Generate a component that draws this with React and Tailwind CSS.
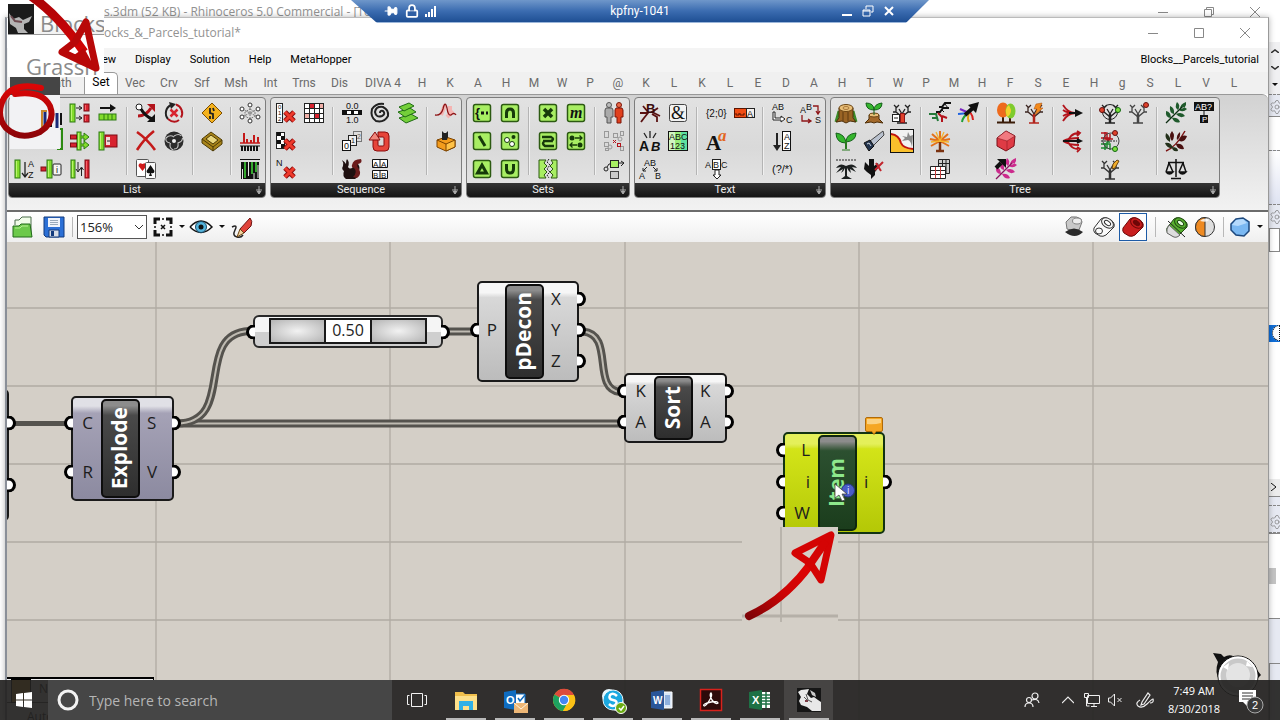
import React, { useState } from 'react';
import { Lock, Pin, Settings } from 'lucide-react';

/* ---------- small drawing helpers ---------- */

const Bar = ({ x, y = 2, w = 6, h = 20, red }) => (
  <g>
    <rect x={x} y={y} width={w} height={h} fill={red ? '#d8232f' : '#83dc2c'} stroke={red ? '#7c0c14' : '#2c7a12'} />
    <path d={`M${x + 1.5} ${y + 1}v${h - 2}`} stroke={red ? '#f4616a' : '#baf56e'} />
  </g>
);

const T = ({ x, y, s = 9, fill = '#111', children, ...rest }) => (
  <text x={x} y={y} fontSize={s} fill={fill} fontFamily="'Liberation Sans', sans-serif" {...rest}>
    {children}
  </text>
);

const RedX = () => (
  <g fill="none">
    <path d="M11 11l9 9M20 11l-9 9" stroke="#8e0f0f" strokeWidth="5" />
    <path d="M11 11l9 9M20 11l-9 9" stroke="#ee3a2c" strokeWidth="3" />
  </g>
);

const SetTile = ({ children }) => (
  <g>
    <rect x="3.5" y="3.5" width="17" height="17" rx="2" fill="#a8ee63" stroke="#2c5a12" strokeWidth="1.5" />
    {children}
  </g>
);

const Branches = ({ color = '#333', trunk = color }) => (
  <g fill="none" stroke={color} strokeWidth="1.3">
    <path d="M12 16L6 11H3M6 11V6L4 4M6 7l3-3M12 16l6-5h3M18 11V6l2-2M18 7l-3-3M12 13L9 8M12 13l3-5" />
    <path d="M12 22v-9" stroke={trunk} strokeWidth="2.5" />
    <path d="M7 22h10" stroke={trunk} />
  </g>
);

const Leaf = ({ color, dark }) => (
  <g>
    <g fill={color}>
      <path d="M7 17q-6 0-5-7q5 1 5 7M10 13q-5-1-4-8q5 2 4 8M14 9q-4-3-1-8q4 3 1 8M8 17q3 6 8 4q-2-5-8-4M12 13q4 5 9 2q-3-5-9-2M15 9q4 3 8-1q-4-4-8 1M16 8q0-5 6-7q1 6-6 7" />
    </g>
    <path d="M2 22L18 6" stroke={dark} strokeWidth="1.3" />
  </g>
);

/* ---------- ribbon icons, 24 x 24 ---------- */

const ICONS = {
  edge: <path d="M17 0h5v20h-5" fill="none" stroke="#2c8a12" strokeWidth="2" />,
  branch: (
    <g>
      <Bar x={2} w={5} y={3} h={18} />
      <path d="M8 7h6M8 17h6M11 5l3 2-3 2M11 15l3 2-3 2" stroke="#222" fill="none" />
      <Bar x={16} w={5} y={3} h={7} red />
      <Bar x={16} w={5} y={14} h={7} red />
    </g>
  ),
  shift: (
    <g>
      <path d="M4 7h14" stroke="#111" strokeWidth="2" /><path d="M14 3l6 4-6 4z" fill="#111" />
      <rect x="3" y="13" width="17" height="6" fill="#83dc2c" stroke="#2c7a12" />
      <path d="M8 13v6M12 13v6M16 13v6" stroke="#2c7a12" />
    </g>
  ),
  insert: (
    <g>
      <Bar x={9} w={4} y={3} h={18} />
      <rect x="2.500" y="6" width="6" height="4" fill="#d8232f" stroke="#7c0c14" />
      <rect x="2.500" y="14" width="6" height="4" fill="#d8232f" stroke="#7c0c14" />
      <path d="M13 7h3V4l5 4-5 4V9h-3M13 15h3v-3l5 4-5 4v-3h-3" stroke="#2c7a12" fill="#83dc2c" />
    </g>
  ),
  replace: (
    <g>
      <Bar x={3} w={5} y={3} h={18} />
      <rect x="9" y="6" width="12" height="12" fill="#d8232f" stroke="#7c0c14" />
      <rect x="10" y="8" width="4" height="8" fill="#f3d5d5" /><path d="M11 12h3" stroke="#222" />
    </g>
  ),
  sortList: (
    <g>
      <Bar x={3} w={5} y={3} h={18} />
      <path d="M13 5v15M10 16l3 4 3-4" stroke="#222" fill="none" strokeWidth="1.3" />
      <T x={16} y={10}>A</T>
      <T x={16} y={21}>Z</T>
    </g>
  ),
  item: (
    <g>
      <rect x="1" y="10" width="5" height="4" fill="#d8232f" stroke="#7c0c14" />
      <Bar x={7} w={5} y={3} h={18} />
      <rect x="13" y="7" width="8" height="11" rx="1" fill="#f5f5f5" stroke="#222" />
      <T x={16} y={16} s={9}>i</T>
    </g>
  ),
  weave: (
    <g>
      <Bar x={3} w={4} y={3} h={18} />
      <path d="M10 5v9M8 12l2 3 2-3M13.500 19v-8M11.500 13l2-3 2 3" stroke="#222" fill="none" />
      <Bar x={17} w={4} y={3} h={18} red />
    </g>
  ),
  dispatch: (
    <g>
      <circle cx="5" cy="6" r="3" fill="#fff" stroke="#222" />
      <path d="M4 15q8 0 13-8" stroke="#b3141c" strokeWidth="3" fill="none" />
      <path d="M13 3h8v8z" fill="#b3141c" />
      <path d="M7 8q4 7 11 10" stroke="#111" strokeWidth="3" fill="none" />
      <path d="M21 13v8h-8z" fill="#111" />
    </g>
  ),
  cycle: (
    <g fill="none">
      <path d="M6 18A9 9 0 0 1 9 4" stroke="#222" strokeWidth="2" />
      <path d="M7 1l7 2-5 5z" fill="#222" />
      <path d="M14 3.500a9 9 0 0 1 5 13" stroke="#b3141c" strokeWidth="2" />
      <path d="M17 19q-5 4-11-1" stroke="#b3141c" strokeWidth="2" />
      <path d="M8.500 8.500l7 7M15.500 8.500l-7 7" stroke="#d8232f" strokeWidth="2.500" />
    </g>
  ),
  cull: <path d="M3 3q10 7 18 18M20 2Q10 10 3 21" stroke="#c41a1a" strokeWidth="2.6" fill="none" />,
  swirl: (
    <g>
      <circle cx="12" cy="12" r="9.5" fill="#2c2c2c" />
      <circle cx="12" cy="12" r="2" fill="#eee" />
      <g fill="none" stroke="#c4c4c4" strokeWidth="1.100">
        <path d="M12 8q-4-3-8 1M15.500 14q5-1 5-5M8.500 14q-2 5 3 7M12 7q5-3 7 0M16 14q1 6-4 6M8 14q-5-1-4-5" />
      </g>
    </g>
  ),
  cards: (
    <g>
      <rect x="2.500" y="2.500" width="12" height="17" rx="1" fill="#fff" stroke="#555" />
      <path d="M8.500 14l-4-5q0-4 4-2q4-2 4 2z" fill="#cf1b1b" />
      <rect x="11.500" y="5.500" width="10" height="16" rx="1" fill="#fafafa" stroke="#555" />
      <path d="M16.500 8l4 6q0 3-3.500 2l1 3h-3l1-3q-3.500 1-3.500-2z" fill="#111" />
    </g>
  ),
  sign: (
    <g>
      <path d="M12 2l10 10-10 10L2 12z" fill="#f5b21d" stroke="#7c4d00" />
      <path d="M10 7v5l3 1v5M13 7l1 3M10 15v3" stroke="#222" strokeWidth="1.8" fill="none" />
    </g>
  ),
  crate: (
    <g>
      <path d="M2 10l9-7 11 8v4l-9 7L2 14z" fill="#a8841a" stroke="#4d3b05" />
      <path d="M2 10l11 8 9-7M13 18v4" stroke="#4d3b05" fill="none" />
      <path d="M6 10l5-4 7 5-5 4z" fill="#e8d67e" stroke="#4d3b05" />
    </g>
  ),
  net: (
    <g fill="none" stroke="#777">
      <path d="M12 4v16M4 8l16 8M20 8L4 16M12 8l5 3v4l-5 3-5-3v-4z" strokeDasharray="2 1" />
      <g fill="#fff" stroke="#333">
        <circle cx="12" cy="4" r="2" /><circle cx="12" cy="20" r="2" /><circle cx="4" cy="8" r="2" />
        <circle cx="20" cy="8" r="2" /><circle cx="4" cy="16" r="2" /><circle cx="20" cy="16" r="2" />
      </g>
    </g>
  ),
  histogram: (
    <g>
      <path d="M2 14h20" stroke="#c41a1a" strokeWidth="1.5" />
      <path d="M6 14V4M9 14v-4M13 14v-3M16 14V6M20 14v-6" stroke="#c41a1a" strokeWidth="2" />
      <path d="M2 17h20" stroke="#111" />
      <path d="M4 17v5M7 17v5M10 17v5M13 17v5M16 17v5M19 17v5" stroke="#111" strokeWidth="2" />
    </g>
  ),
  barcode: (
    <g>
      <path d="M2 2.500h20" stroke="#111" />
      <rect x="3" y="5" width="18" height="17" fill="#111" />
      <path d="M7 5v16M14 5v12M18 5v10" stroke="#35a82f" strokeWidth="2" />
      <path d="M4.500 12v10M10.500 5v14M16 16v6M20 8v13" stroke="#e5e5e5" />
    </g>
  ),
  cullIndex: (
    <g>
      <rect x="2.500" y="2.500" width="6" height="19" fill="#fff" stroke="#222" />
      <T x={4} y={8} s={6}>0</T><T x={4} y={14} s={6}>1</T><T x={4} y={20} s={6}>2</T>
      <RedX />
    </g>
  ),
  redGrid: (
    <g>
      <rect x="2.500" y="2.500" width="19" height="19" fill="#fff" stroke="#222" />
      <rect x="8" y="3" width="4" height="4" fill="#d8232f" /><rect x="12" y="12" width="5" height="5" fill="#d8232f" />
      <rect x="17" y="3" width="4" height="4" fill="#f0b0a8" /><rect x="3" y="12" width="4" height="5" fill="#f0b0a8" />
      <path d="M7.500 3v18M12.500 3v18M17.500 3v18M3 7.500h18M3 12.500h18M3 17.500h18" stroke="#222" />
    </g>
  ),
  cullPattern: (
    <g>
      <rect x="2.500" y="3.500" width="8" height="16" fill="#fff" stroke="#222" />
      <path d="M3 3h4v4H3zM7 7h4v4H7zM3 11h4v4H3zM7 15h4v4H7z" fill="#111" />
      <RedX />
    </g>
  ),
  cullN: (
    <g>
      <T x={2} y={9}>N</T>
      <RedX />
    </g>
  ),
  range: (
    <g>
      <T x={6} y={8}>0.0</T>
      <rect x="2.500" y="9.500" width="19" height="4" fill="#fff" stroke="#111" />
      <path d="M3 11.500h4M11 11.500h3M18 11.500h3" stroke="#111" strokeWidth="4" />
      <T x={6} y={22}>1.0</T>
    </g>
  ),
  spiral: (
    <path d="M12 12q0-3 3-2q3 3-1 5q-6 2-7-4q1-6 8-5q6 3 5 9q-4 7-12 5q-6-4-4-12q4-6 12-5" fill="none" stroke="#222" strokeWidth="2" />
  ),
  steps: (
    <g fill="#74cf3a" stroke="#1f6b14">
      <path d="M3 17l12-4 7 4-12 5z" /><path d="M2 11l12-4 6 4-11 5z" /><path d="M3 6l10-4 5 3-10 5z" />
    </g>
  ),
  series: (
    <g>
      <rect x="13.500" y="2.500" width="8" height="10" fill="#ddd" stroke="#777" />
      <rect x="8.500" y="6.500" width="8" height="10" fill="#eee" stroke="#222" />
      <rect x="2.500" y="11.500" width="8" height="10" fill="#fff" stroke="#111" />
      <T x={4} y={20}>0</T><T x={11} y={14} s={7}>1</T><T x={17} y={10} s={7} fill="#666">2</T>
    </g>
  ),
  loop: (
    <g>
      <path d="M5 10v8q0 4 4 4h8q4 0 4-4V7q0-4-4-4h-7v5h5q1 0 1 1v7q0 1-1 1h-4q-1 0-1-1v-6z" stroke="#8a0d0d" fill="#e6453a" />
      <path d="M1 11l6-8 5 8z" fill="#f0877c" stroke="#8a0d0d" />
    </g>
  ),
  rabbit: (
    <g>
      <path d="M2 3q3 2 4 4q0-4 1-5q3 3 1 8q2 3 5 0q1-4 5-3q3 4 0 8q1 5-3 7H6q-4-3-2-8q-3-2-1-5q1-3-1-6" fill="#1f1010" />
      <path d="M12 8q1-6 9-6q2 4-3 5q-2 2 1 5q3 6-2 9l-4-1q5-5 1-9q-3-1-2-3" fill="#6b1c1c" />
    </g>
  ),
  aabb: (
    <g>
      <path d="M4.500 2.500h15v8h-15zM4.500 13.500h15v8h-15zM12 3v8M12 13v8" fill="#fff" stroke="#111" />
      <T x={5} y={10} s={8}>A</T><T x={13} y={10} s={8}>A</T><T x={5} y={21} s={8}>B</T><T x={13} y={21} s={8}>B</T>
    </g>
  ),
  jitter: (
    <g fill="none">
      <path d="M7 14l4-10M13 16l6-6M16 5v7" stroke="#f5b4b2" strokeWidth="4" />
      <path d="M1 14q6 1 8-6q2-9 4-1q1 8 4 7q3-3 5 0" stroke="#8e1618" strokeWidth="1.300" />
    </g>
  ),
  catBox: (
    <g>
      <path d="M3 11l9-3 9 3v7l-9 4-9-4z" fill="#f49c1c" stroke="#7c4300" />
      <path d="M12 15l9-4v7l-9 4z" fill="#ffc247" stroke="#7c4300" /><path d="M3 11l9 4" stroke="#7c4300" />
      <path d="M8 11V2l2 2h2l2-2v6l-1 3z" fill="#222" />
    </g>
  ),
  setMember: <SetTile><T x={5} y={16} s={13} fontWeight="bold">{'{'}</T><path d="M11 12h3M16 12h2" stroke="#111" strokeWidth="3" /></SetTile>,
  setIntersect: <SetTile><path d="M8.500 17v-5q0-4 3.500-4t3.500 4v5" fill="none" stroke="#163a0a" strokeWidth="3" /></SetTile>,
  setDiff: <SetTile><path d="M9 7l6 10" stroke="#163a0a" strokeWidth="3" /></SetTile>,
  setDisjoint: <SetTile><circle cx="9" cy="11" r="2.500" fill="#fff" stroke="#163a0a" /><circle cx="14" cy="15" r="2.500" fill="#fff" stroke="#163a0a" /><circle cx="15.500" cy="8" r="2" fill="#163a0a" /></SetTile>,
  setDelta: <SetTile><path d="M12 8l4.500 8h-9z" fill="#a8ee63" stroke="#163a0a" strokeWidth="3" /></SetTile>,
  setUnion: <SetTile><path d="M8.500 7v5q0 4 3.500 4t3.500-4V7" fill="none" stroke="#163a0a" strokeWidth="3" /></SetTile>,
  setCross: <SetTile><path d="M8 8l8 8M16 8l-8 8" stroke="#163a0a" strokeWidth="3.500" /></SetTile>,
  setMajority: <SetTile><T x={6} y={17} s={16} fontStyle="italic" fontWeight="bold" style={{ fontFamily: 'Liberation Serif, serif' }}>m</T></SetTile>,
  setString: <SetTile><path d="M6 8h9q4 2 0 4H7M17 12H9q-4 2 0 5h9" fill="none" stroke="#163a0a" strokeWidth="2.500" /></SetTile>,
  setSwap: <SetTile><circle cx="8" cy="9" r="2.500" fill="#163a0a" /><circle cx="16" cy="16" r="2.500" fill="#163a0a" /><path d="M11 9h7M15.500 6.500l2.500 2.500-2.500 2.500M13 16H6M8.500 13.500L6 16l2.500 2.500" fill="none" stroke="#163a0a" strokeWidth="1.300" /></SetTile>,
  setSplit: (
    <g>
      <path d="M3 3h7l-2 3 3 3-3 3 3 3-3 3 2 3H3zM15 3h6v18h-6l2-3-3-3 3-3-3-3 3-3z" fill="#a8ee63" stroke="#2c5a12" />
      <path d="M13 2l-2 3 3 3-3 4 3 3-3 3 2 3" fill="none" stroke="#222" strokeDasharray="2 1" />
    </g>
  ),
  people: (
    <g>
      <circle cx="7" cy="4" r="2.500" fill="#bbb" stroke="#555" />
      <path d="M4 7h6l1 2v7H9v6H5v-6H3V9z" fill="#aaa" stroke="#555" />
      <circle cx="17" cy="4" r="2.500" fill="#e86a48" stroke="#7c1408" />
      <path d="M14 7h6l1 2v7h-2v6h-4v-6h-2V9z" fill="#e0401d" stroke="#7c1408" />
    </g>
  ),
  nodesGrey: (
    <g fill="none" stroke="#999">
      <rect x="2.500" y="2.500" width="4" height="6" /><rect x="11.500" y="4.500" width="4" height="4" /><rect x="18.500" y="2.500" width="3" height="4" />
      <rect x="2.500" y="13.500" width="4" height="4" /><circle cx="8" cy="18" r="2" /><rect x="18.500" y="17.500" width="3" height="4" /><circle cx="18" cy="10" r="2" /><rect x="3.500" y="19.500" width="3" height="2" />
      <path d="M11 11l3 3M14 11l-3 3" stroke="#b3141c" /><rect x="15.500" y="14.500" width="3" height="3" stroke="#b3141c" />
    </g>
  ),
  link: (
    <g>
      <rect x="8.500" y="3.500" width="8" height="7" fill="#a8ee63" stroke="#222" />
      <rect x="8.500" y="14.500" width="8" height="7" fill="#ccc" stroke="#444" />
      <path d="M17 6h5M19 4l3 2-3 3" stroke="#222" fill="none" /><circle cx="4" cy="12" r="2" fill="none" stroke="#222" /><path d="M5 10l2-3h2" stroke="#222" fill="none" />
    </g>
  ),
  spiderB: (
    <g>
      <path d="M5 5l5 6M2 12h8l-4 5-3 4M20 7l-6 4 8 4M14 13l5 3v5" stroke="#5a1212" strokeWidth="1.800" fill="none" />
      <T x={8} y={12} s={13} fill="#3a0c0c" fontWeight="bold">B</T>
    </g>
  ),
  ampersand: (
    <g>
      <rect x="3.500" y="3.500" width="17" height="17" rx="2" fill="#f2f2f2" stroke="#444" />
      <text x="5" y="18" fontSize="18" fontFamily="Liberation Serif, serif" fill="#111">&amp;</text>
    </g>
  ),
  split: (
    <g>
      <T x={1} y={22} s={14} fontWeight="bold">A</T><T x={13} y={22} s={13} fontStyle="italic" fontWeight="bold">B</T>
      <path d="M12 2v7M6 4l3 5M18 4l-3 5" stroke="#222" strokeWidth="1.300" />
    </g>
  ),
  abc123: (
    <g>
      <rect x="2.500" y="2.500" width="19" height="19" fill="#d2f6c2" stroke="#111" />
      <rect x="9" y="3" width="6" height="18" fill="#9aee7a" /><rect x="15" y="3" width="6" height="18" fill="#5ee0a0" />
      <T x={3} y={11}>ABC</T><T x={4} y={20}>123</T>
    </g>
  ),
  abTree: (
    <g>
      <T x={6} y={9}>AB</T><T x={1} y={22}>A</T><T x={17} y={22}>B</T>
      <path d="M9 10l-4 4M5 11v3h3M15 10l4 4M19 11v3h-3" stroke="#222" fill="none" />
    </g>
  ),
  format: <T x={2} y={16} s={10}>{'{2;0}'}</T>,
  redTag: (
    <g>
      <rect x="2.500" y="7.500" width="20" height="9" fill="#f24d14" stroke="#5c1400" />
      <rect x="14.500" y="7.500" width="8" height="9" fill="#f5efec" stroke="#222" />
      <T x={15} y={16}>A</T><path d="M4 12v2h3v-2M8 12v2h4v-2" stroke="#5c1400" fill="none" />
    </g>
  ),
  font: (
    <g fontFamily="Liberation Serif, serif">
      <text x="2" y="21" fontSize="21" fontWeight="bold" fill="#111">A</text>
      <text x="14" y="12" fontSize="17" fontWeight="bold" fontStyle="italic" fill="#e2661e">a</text>
    </g>
  ),
  abcDown: (
    <g>
      <rect x="8.500" y="2.500" width="8" height="10" fill="#fff" stroke="#222" />
      <T x={1} y={11}>A</T><T x={9} y={11}>B</T><T x={17} y={11}>C</T>
      <path d="M11 13h4v5h2l-4 4-4-4h2z" fill="#fff" stroke="#222" />
    </g>
  ),
  abToC: (
    <g>
      <T x={2} y={9}>AB</T><T x={16} y={22}>C</T>
      <path d="M3 11v8h8v2l4-3-4-3v2H5v-6z" fill="#fff" stroke="#222" />
    </g>
  ),
  abToS: (
    <g>
      <T x={2} y={12}>A</T><T x={8} y={9}>B</T><T x={17} y={22}>S</T>
      <path d="M15 5h5v8M18 10l2 3 2-3M4 14v6h9M10 18l3 2-3 2" stroke="#8e1618" fill="none" strokeWidth="1.300" />
    </g>
  ),
  sortText: (
    <g>
      <path d="M7 4v14" stroke="#222" strokeWidth="2" /><path d="M3 16h8l-4 6z" fill="#222" />
      <rect x="12.500" y="2.500" width="8" height="19" fill="#fff" stroke="#111" />
      <T x={14} y={11}>A</T><T x={14} y={20}>Z</T>
    </g>
  ),
  match: <T x={2} y={16} s={11}>(?/*)</T>,
  stump: (
    <g>
      <path d="M2 21q2-7 3-11M22 21q-2-7-3-11" stroke="#3c8a28" strokeWidth="3" />
      <path d="M5 7v10l-3 4 6-1 4 2 4-2 6 1-3-4V7z" fill="#9a6424" stroke="#4d2e08" />
      <path d="M9 11v9M14 11v9" stroke="#5e3a10" />
      <ellipse cx="12" cy="7" rx="7" ry="3.500" fill="#e9bf78" stroke="#6b4412" /><ellipse cx="12" cy="7" rx="3" ry="1.500" fill="none" stroke="#a9783a" />
    </g>
  ),
  regrow: (
    <g>
      <path d="M7 14v4l-4 4 6-1 3 1 3-1 6 1-4-4v-4z" fill="#a3692a" stroke="#4d2e08" />
      <ellipse cx="12" cy="14" rx="5" ry="2" fill="#e9bf78" stroke="#6b4412" />
      <path d="M12 9q-8 0-8-7q8 0 8 7M12 9q0-6 8-7q0 7-8 7M12 8v6" fill="#35b52e" stroke="#14601a" />
    </g>
  ),
  prune: (
    <g>
      <Branches color="#222" />
      <rect x="10.500" y="12.500" width="4" height="9" fill="#e0412a" stroke="#8e1618" />
      <rect x="2.500" y="13.500" width="7" height="7" fill="#fff" stroke="#222" /><path d="M4 17h4" stroke="#222" />
    </g>
  ),
  sprout: (
    <g>
      <path d="M12 14q-10 0-10-10q9 1 10 10M12 13q0-8 10-9q0 8-10 9" fill="#35b52e" stroke="#14601a" />
      <path d="M12 12v8" stroke="#2a7a20" strokeWidth="2" /><path d="M8 21h8" stroke="#2a7a20" />
    </g>
  ),
  saw: (
    <g>
      <path d="M8 12L21 2l1 4-11 11z" fill="#b9c1ce" stroke="#444" />
      <path d="M2 14l6-3 4 6-5 5-2-3z" fill="#23344e" stroke="#111" /><path d="M5 15l2-1 2 3" stroke="#cdd3dc" fill="none" />
    </g>
  ),
  graft: (
    <g>
      <rect x="0.500" y="0.500" width="23" height="23" fill="#f1f1f1" stroke="#111" />
      <path d="M1 5q8 1 10 9q2 5 12 6v3H1z" fill="#f9c02c" />
      <path d="M1 5q8 1 10 9q2 5 12 6" fill="none" stroke="#c2140f" strokeWidth="2" />
      <path d="M22 18q-1-6-4-7l-6 1 3-3-3-2 5 1 1-5 2 4 3-1z" fill="#8a8a8a" />
    </g>
  ),
  palm: (
    <g>
      <path d="M2 3h20" stroke="#222" strokeDasharray="2 1" />
      <path d="M12 9q-6-4-10 2l5-1-5 6 7-4-2 4q3-2 4-5v8l-4 3h11l-5-3v-8q2 4 4 5l-1-4 6 3-4-5 5 1q-4-6-11-2" fill="#1c2020" />
    </g>
  ),
  trim: (
    <g>
      <path d="M7 2h5v7l4-3 1 4-4 5v3l-4 4v-4l-4-3-3-3 1-7 4 4z" fill="#111" />
      <path d="M13 13l8-8M14 6l5 8" stroke="#c2252d" strokeWidth="2" />
    </g>
  ),
  dna: (
    <g>
      <path d="M23 2h-6l-3 4h-3M21 7h-6l-3 4H8" stroke="#111" strokeWidth="2" fill="none" />
      <path d="M17 3l3 4M13 8l3 3" stroke="#111" />
      <path d="M10 12l4 4 0 5M14 15l5 2" stroke="#b3141c" strokeWidth="2" fill="none" />
      <path d="M1 13l7 0 2 7M4 17h5" stroke="#257a3a" strokeWidth="2" fill="none" />
    </g>
  ),
  rainbow: (
    <g fill="none" strokeWidth="2">
      <path d="M13 12L4 8" stroke="#7a25c2" /><path d="M13 12L2 13" stroke="#1f63e0" /><path d="M13 12q-6 3-7 9" stroke="#20a038" />
      <path d="M13 12q-2 5 0 9" stroke="#e8a613" /><path d="M14 11q3 4 3 8" stroke="#d82020" />
      <path d="M9 14l9-8" stroke="#111" strokeWidth="4" /><path d="M12 4l11-3-3 11z" fill="#111" />
    </g>
  ),
  fire: (
    <g>
      <g stroke="#e2701a" strokeWidth="2" fill="none"><path d="M12 12L4 5M12 12V2M12 12l8-7M12 12L2 10M12 12l10-2M12 12l-9 5M12 12l9 5" /></g>
      <g stroke="#f4b42c" strokeWidth="1.300" fill="none"><path d="M12 12L8 3M12 12l4-9M12 12L3 13M12 12l9 1" /></g>
      <path d="M12 13v9M8 22h8" stroke="#7a3210" strokeWidth="2.500" />
    </g>
  ),
  tables: (
    <g>
      <path d="M10.500 2.500h11v14h-11zM14.500 3v14M18 3v14M11 6.500h11" fill="#ccc" stroke="#222" />
      <path d="M2.500 9.500h15v12h-15zM2.500 13.500h15M2.500 17.500h15" fill="#fff" stroke="#222" /><path d="M7.500 10v11M12.500 10v11" stroke="#c63a3a" />
    </g>
  ),
  autumn: (
    <g>
      <path d="M9 14v7M16 14v7M3 21.500h18" stroke="#3a1c08" strokeWidth="2" />
      <ellipse cx="9" cy="9" rx="6" ry="7.500" fill="#ee6a1c" /><ellipse cx="16.500" cy="10" rx="5" ry="7.500" fill="#7ecb2c" />
      <path d="M15 4q-5 3-2 12q4-2 4-7z" fill="#f2d22c" />
    </g>
  ),
  lightning: (
    <g>
      <Branches color="#3a2420" trunk="#b3241c" />
      <path d="M14 3l6-1-2 5h3l-8 7 2-6h-3z" fill="#f28a1c" stroke="#a84a08" strokeWidth=".5" />
    </g>
  ),
  ruby: (
    <g stroke="#7c1019">
      <path d="M3 9l9-7 9 5-1 10-8 5-9-5z" fill="#df3b45" /><path d="M3 9l10 3 8-5-9-5z" fill="#f17a80" strokeWidth=".5" /><path d="M13 12v9" strokeWidth=".5" />
    </g>
  ),
  pinkLeaf: (
    <g>
      <Leaf color="#cc2a8c" dark="#8a1460" />
      <path d="M2 11l5-5" stroke="#111" strokeWidth="4" /><path d="M3 2h9v9z" fill="#111" />
    </g>
  ),
  merge: (
    <g fill="none" stroke="#b3141c" strokeWidth="1.800">
      <path d="M3 4q5 8 12 8M3 9q4 3 12 3M3 20q5-8 12-8" /><path d="M3 15q5-3 13-3" /><path d="M9 12h8" stroke="#111" /><path d="M15 8l8 4-8 4z" fill="#111" stroke="none" />
    </g>
  ),
  explodeTree: (
    <g fill="none" stroke="#b3141c" strokeWidth="1.800">
      <path d="M3 12q5 0 8-5 3-3 8-3M3 12q6-3 16-3M3 12q6 4 16 4M3 12q5 0 7 4 3 4 8 4M17 2l3 2-3 3M17 18l3 2-3 3" /><path d="M3 12h17M17 10l4 2-4 2" stroke="#111" />
    </g>
  ),
  treeBalls: (
    <g>
      <Branches color="#222" />
      <circle cx="12" cy="11" r="7.500" fill="none" stroke="#222" />
      <circle cx="4" cy="9" r="2.500" fill="#e0412a" stroke="#611" /><circle cx="20" cy="9" r="2.500" fill="#7be03c" stroke="#161" />
    </g>
  ),
  treeRed: <g><Branches color="#444" /><circle cx="20" cy="4" r="2.500" fill="#e0412a" stroke="#611" /></g>,
  treeMix: (
    <g fill="none">
      <path d="M3 4h6v7h3M3 9h9V5M7 3v7h8" stroke="#b3141c" strokeWidth="1.500" />
      <path d="M3 19h6v-6h3M3 15h9v6M7 21v-7" stroke="#1d8a30" strokeWidth="1.500" />
      <circle cx="13" cy="12" r="8" stroke="#444" /><path d="M3 12h16" stroke="#222" strokeDasharray="2 1" />
      <circle cx="17" cy="4" r="2.500" fill="#e0412a" stroke="#611" /><circle cx="17" cy="20" r="2.500" fill="#7be03c" stroke="#161" />
    </g>
  ),
  treeGold: <g><Branches color="#333" /><path d="M14 12l1-5 4-4 2 1-4 7z" fill="#f0ac2a" stroke="#6b4412" /></g>,
  leaf: <Leaf color="#1f5a2c" dark="#0c2c12" />,
  abQuery: (
    <g>
      <rect x="2" y="1" width="20" height="9" fill="#111" /><T x={3} y={9} fill="#fff">AB?</T>
      <path d="M12 10v4" stroke="#111" /><rect x="8" y="14" width="8" height="8" fill="#111" /><T x={10} y={21} s={8} fill="#fff">P</T>
    </g>
  ),
  leaves: (
    <g>
      <path d="M2 22Q12 18 21 2" stroke="#7c1414" strokeWidth="1.500" fill="none" />
      <g fill="#4a1010"><path d="M8 2q4 5 0 10q-4-5 0-10M16 3q1 5-3 8q-1-5 3-8M23 7q-2 7-8 5q2-7 8-5M12 15q7-1 8 5q-7 1-8-5" /></g>
      <g fill="#23301a"><path d="M2 4q5 3 4 9q-6-3-4-9M1 14q6-1 8 5q-6 1-8-5M8 18q6 0 6 4q-6 1-6-4" /></g>
    </g>
  ),
  scales: (
    <g fill="none" stroke="#111" strokeWidth="1.500">
      <path d="M12 2v18M7 21.500h10M4 5.500h16M5 6L2 15M5 6l4 9M19 6l-4 9M19 6l3 9" /><path d="M2 15h7q-3.500 4-7 0M15 15h7q-3.500 4-7 0" fill="#111" />
    </g>
  ),
};

const GROUPS = [
  {
    name: 'List',
    sections: [
      { cols: 'grid-cols-[repeat(4,28px)]', icons: [null, null, 'branch', 'shift', null, 'edge', 'insert', 'replace', 'sortList', 'item', 'weave', null] },
      { cols: 'grid-cols-[repeat(2,28px)]', icons: ['dispatch', 'cycle', 'cull', 'swirl', 'cards', null] },
      { cols: 'grid-cols-[28px]', icons: ['sign', 'crate', null] },
      { cols: 'grid-cols-[28px]', icons: ['net', 'histogram', 'barcode'] },
    ],
  },
  {
    name: 'Sequence',
    sections: [
      { cols: 'grid-cols-[repeat(2,28px)]', icons: ['cullIndex', 'redGrid', 'cullPattern', null, 'cullN', null] },
      { cols: 'grid-cols-[repeat(3,28px)]', icons: ['range', 'spiral', 'steps', 'series', 'loop', null, 'rabbit', 'aabb', null] },
      { cols: 'grid-cols-[28px]', icons: ['jitter', 'catBox', null] },
    ],
  },
  {
    name: 'Sets',
    sections: [
      { cols: 'grid-cols-[repeat(2,28px)]', icons: ['setMember', 'setIntersect', 'setDiff', 'setDisjoint', 'setDelta', 'setUnion'] },
      { cols: 'grid-cols-[repeat(2,28px)]', icons: ['setCross', 'setMajority', 'setString', 'setSwap', 'setSplit', null] },
      { cols: 'grid-cols-[28px]', icons: ['people', 'nodesGrey', 'link'] },
    ],
  },
  {
    name: 'Text',
    sections: [
      { cols: 'grid-cols-[repeat(2,28px)]', icons: ['spiderB', 'ampersand', 'split', 'abc123', 'abTree', null] },
      { cols: 'grid-cols-[repeat(2,28px)]', icons: ['format', 'redTag', 'font', null, 'abcDown', null] },
      { cols: 'grid-cols-[repeat(2,28px)]', icons: ['abToC', 'abToS', 'sortText', null, 'match', null] },
    ],
  },
  {
    name: 'Tree',
    sections: [
      { cols: 'grid-cols-[repeat(3,28px)]', icons: ['stump', 'regrow', 'prune', 'sprout', 'saw', 'graft', 'palm', 'trim', null] },
      { cols: 'grid-cols-[repeat(2,28px)]', icons: ['dna', 'rainbow', 'fire', null, 'tables', null] },
      { cols: 'grid-cols-[repeat(2,28px)]', icons: ['autumn', 'lightning', 'ruby', null, 'pinkLeaf', null] },
      { cols: 'grid-cols-[28px]', icons: ['merge', 'explodeTree', null] },
      { cols: 'grid-cols-[repeat(2,28px)]', icons: ['treeBalls', 'treeRed', 'treeMix', null, 'treeGold', null] },
      { cols: 'grid-cols-[repeat(2,28px)]', icons: ['leaf', 'abQuery', 'leaves', null, 'scales', null] },
    ],
  },
];

const TABS = [
  { label: 'ath', width: 'w-[42px]' },
  { label: 'Set', width: 'w-[34px]' },
  { label: 'Vec', width: 'w-[34px]' },
  { label: 'Crv', width: 'w-[34px]' },
  { label: 'Srf', width: 'w-[32px]' },
  { label: 'Msh', width: 'w-[36px]' },
  { label: 'Int', width: 'w-[33px]' },
  { label: 'Trns', width: 'w-[34px]' },
  { label: 'Dis', width: 'w-[37px]' },
  { label: 'DIVA 4', width: 'w-[50px]' },
  ...'HKAHMWP@KLKLEDAHTWPMHFSEHgSLVL'.split('').map((label) => ({ label, width: 'w-7' })),
];

function TitleButtons({ maximized }) {
  return (
    <div className="flex shrink-0 gap-[6px] text-[#888]">
      <button type="button" aria-label="Minimize" className="flex h-4 w-10 items-center justify-center">
        <svg className="h-3 w-3" viewBox="0 0 12 12"><path d="M1 6.500h10" stroke="currentColor" /></svg>
      </button>
      <button type="button" aria-label="Maximize" className="flex h-4 w-10 items-center justify-center">
        <svg className="h-3 w-3" viewBox="0 0 12 12" fill="none" stroke="currentColor">
          {maximized ? <path d="M1.500 3.500h7v7h-7zM3.500 3.500v-2h7v7h-2" /> : <path d="M1.500 1.500h9v9h-9z" />}
        </svg>
      </button>
      <button type="button" aria-label="Close" className="flex h-4 w-10 items-center justify-center">
        <svg className="h-3 w-3" viewBox="0 0 12 12"><path d="M1 1l10 10M11 1L1 11" stroke="currentColor" /></svg>
      </button>
    </div>
  );
}

function RibbonGroup({ name, sections }) {
  return (
    <section className="flex flex-col overflow-hidden rounded-[4px] border border-[#7d7d7d] bg-linear-to-b from-[#e2e2e2] via-[#d9d9d9] to-[#e6e6e6]">
      <div className="flex px-px pt-px">
        {sections.map((section, i) => (
          <React.Fragment key={i}>
            {i > 0 && <div className="mx-[4px] my-2 w-[2px] border-l border-[#b4b4b4] bg-[#f0f0f0]" />}
            <div className={`grid auto-rows-[28px] ${section.cols}`}>
              {section.icons.map((icon, n) =>
                icon ? (
                  <button key={n} type="button" aria-label={icon} className="grid place-items-center">
                    <svg className="h-6 w-6 overflow-visible" viewBox="0 0 24 24">{ICONS[icon]}</svg>
                  </button>
                ) : (
                  <span key={n} />
                )
              )}
            </div>
          </React.Fragment>
        ))}
      </div>
      <div className="flex h-[14px] items-center bg-linear-to-b from-[#353535] to-[#151515] pr-[2px] text-[11px] leading-[14px] text-[#eee]">
        <span className="flex-1 text-center">{name}</span>
        <svg className="h-2 w-2" viewBox="0 0 8 8"><path d="M4 0v6M1 4h6M2 5l2 3 2-3" stroke="#aaa" fill="#aaa" /></svg>
      </div>
    </section>
  );
}

function Ribbon() {
  const [active, setActive] = useState(1);
  return (
    <div>
      <nav className="flex h-[22px] bg-[#f0f0f0] pl-[35px] text-[12px] text-[#6b6b6b]">
        {TABS.map((tab, i) => (
          <button
            key={i}
            type="button"
            onClick={() => setActive(i)}
            className={`${tab.width} shrink-0 text-center ${
              i === active ? 'z-10 rounded-t-[5px] border border-b-0 border-[#999] bg-white pb-1 text-black' : ''
            }`}
          >
            {tab.label}
          </button>
        ))}
      </nav>
      <div className="flex h-[116px] items-start gap-[4px] rounded-tr-[6px] border-t border-[#999] bg-linear-to-b from-[#d2d2d2] to-[#f2f2f2] pt-[2px] pl-px">
        {GROUPS.map((group) => (
          <RibbonGroup key={group.name} {...group} />
        ))}
      </div>
    </div>
  );
}

const Caret = () => (
  <svg className="h-1 w-[6px]" viewBox="0 0 6 4"><path d="M0 0h6L3 3z" fill="#111" /></svg>
);

const Tube = ({ body, hole, line = '#333' }) => (
  <g stroke={line}>
    <path d="M2 13L9 4q2-2 6-1l6 4q2 2 1 5l-8 8q-3 2-6 1l-5-3q-2-2-1-5z" fill={body} />
    <ellipse cx="15.500" cy="8" rx="6.500" ry="4.500" transform="rotate(35 15.500 8)" fill={body} />
    <ellipse cx="15.500" cy="8" rx="3.500" ry="2" transform="rotate(35 15.500 8)" fill={hole} />
  </g>
);

function Toolbar() {
  return (
    <div className="flex h-8 shrink-0 items-center border-t-2 border-[#6b6b6b] bg-linear-to-b from-white to-[#efefef] pr-[5px]">
      <button type="button" aria-label="Open file" className="grid h-6 w-[31px] place-items-center">
        <svg className="h-6 w-6" viewBox="0 0 24 24">
          <path d="M4 10V5h4l3-3h9v18H4" fill="#f0fce8" stroke="#4b6c4b" />
          <path d="M2 11h6l2-2h9l2 13H2z" fill="#6cc94a" stroke="#226b1a" /><path d="M4 13h5l2-2h6" fill="none" stroke="#b5f090" />
        </svg>
      </button>
      <button type="button" aria-label="Save file" className="grid h-6 w-[31px] place-items-center">
        <svg className="h-6 w-6" viewBox="0 0 24 24">
          <path d="M2 2h20v20H4l-2-2z" fill="#2c70d6" stroke="#123a7c" />
          <path d="M6 3h12v9H6z" fill="#eef3fb" /><path d="M8 5.500h8M8 7.500h8M8 9.500h8" stroke="#9ab" />
          <path d="M7 15h10v7H7z" fill="#d8dde6" stroke="#123a7c" /><path d="M9 16h3v5H9z" fill="#123a7c" />
        </svg>
      </button>
      <span className="mr-[4px] ml-[3px] h-5 w-px bg-[#b8b8b8]" />
      <div className="relative">
        <select aria-label="Zoom" defaultValue="156%" className="h-6 w-[70px] appearance-none border border-[#555] bg-white pl-[2px] font-['Open_Sans'] text-[13px] leading-5 text-[#222]">
          <option>100%</option>
          <option>156%</option>
          <option>200%</option>
        </select>
        <svg className="pointer-events-none absolute top-2 right-1 h-2 w-2" viewBox="0 0 8 8"><path d="M0 2l4 4 4-4" fill="none" stroke="#333" /></svg>
      </div>
      <button type="button" aria-label="Zoom extents" className="ml-1 flex h-6 items-center gap-1">
        <svg className="h-6 w-6" viewBox="0 0 24 24">
          <path d="M4 9V4h5M15 4h5v5M20 15v5h-5M9 20H4v-5" fill="none" stroke="#111" strokeWidth="3" />
          <path d="M10 10l4 4M14 10l-4 4M4 11v2M20 11v2M11 4h2M11 20h2" stroke="#111" strokeWidth="1.500" />
        </svg>
        <Caret />
      </button>
      <button type="button" aria-label="Named views" className="ml-[4px] flex h-6 items-center gap-[6px]">
        <svg className="h-6 w-6" viewBox="0 0 24 24">
          <path d="M1 12Q12 0 23 12Q12 23 1 12" fill="#fff" stroke="#111" strokeWidth="1.500" />
          <circle cx="12" cy="12" r="5.500" fill="#54b4dc" stroke="#1a4a66" /><circle cx="12" cy="12" r="2.500" fill="#111" />
        </svg>
        <Caret />
      </button>
      <button type="button" aria-label="Sketch" className="ml-[5px] grid h-6 w-6 place-items-center">
        <svg className="h-6 w-6" viewBox="0 0 24 24">
          <path d="M2 12q6-3 3 3t2 7q4 1 6-2" fill="none" stroke="#222" strokeWidth="1.500" />
          <path d="M10 14L20 3q3 3 1 8l-7 7z" fill="#e0433a" stroke="#6b1414" /><path d="M10 14l4 4-7 4z" fill="#f1d3a0" stroke="#6b4412" />
        </svg>
      </button>

      <div className="ml-auto flex items-center">
        <button type="button" aria-label="No preview" className="grid h-7 w-[30px] place-items-center">
          <svg className="h-6 w-6" viewBox="0 0 24 24">
            <path d="M4 7l5-5q6-1 10 2l1 3-3 8q-6 2-12-1z" fill="#c9c9c9" stroke="#777" /><ellipse cx="15" cy="6" rx="4.500" ry="3" fill="#eee" stroke="#888" />
            <path d="M3 17q9-7 18 0q-8 8-18 0" fill="#2a2a2a" />
          </svg>
        </button>
        <button type="button" aria-label="Wireframe preview" className="grid h-7 w-[30px] place-items-center">
          <svg className="h-6 w-6" viewBox="0 0 24 24"><Tube body="#fafafa" hole="#fff" /><ellipse cx="7" cy="16" rx="3.500" ry="3" fill="none" stroke="#333" /></svg>
        </button>
        <button type="button" aria-label="Shaded preview" className="grid h-7 w-7 place-items-center border border-[#1d5ba6] bg-[#fdfdfd]">
          <svg className="h-6 w-6" viewBox="0 0 24 24"><Tube body="#c81e1e" hole="#6e0808" line="#6e0808" /></svg>
        </button>
        <span className="mr-[7px] ml-[8px] h-5 w-px bg-[#b8b8b8]" />
        <button type="button" aria-label="Preview selected" className="grid h-7 w-7 place-items-center">
          <svg className="h-6 w-6" viewBox="0 0 24 24">
            <Tube body="#58b02e" hole="#e8ffe0" line="#1f4a10" />
            <path d="M4 10l11 10q-4 4-8 1l-5-3q-1-4 2-8" fill="#ddd" stroke="#666" /><path d="M3 6l17 16" stroke="#222" />
          </svg>
        </button>
        <button type="button" aria-label="Document settings" className="grid h-7 w-7 place-items-center">
          <svg className="h-6 w-6" viewBox="0 0 24 24">
            <circle cx="12" cy="12" r="9.500" fill="#dedede" stroke="#333" /><path d="M12 2.500a9.500 9.500 0 0 0 0 19z" fill="#ee8a22" stroke="#333" />
            <path d="M7 6q4-4 9-1q-2 3-9 1" fill="#fff" opacity=".8" />
          </svg>
        </button>
        <span className="mx-[4px] h-5 w-px bg-[#b8b8b8]" />
        <button type="button" aria-label="Mesh quality" className="flex h-7 items-center gap-[5px]">
          <svg className="h-6 w-6" viewBox="0 0 24 24">
            <path d="M8 4l7-1 6 4v9l-5 5-8-1-5-5V9z" fill="#7ab8f2" stroke="#1c477c" strokeWidth="1.500" /><path d="M8 5l7-1 4 4-9 3-6-1z" fill="#b5dafc" />
          </svg>
          <Caret />
        </button>
      </div>
    </div>
  );
}

/* ---------- canvas components ---------- */

const Port = ({ side }) => (
  <span
    className={
      side === 'left'
        ? 'absolute top-1/2 right-full h-[15px] w-[9px] -translate-y-1/2 rounded-l-full border-[3px] border-r-0 border-black bg-white'
        : 'absolute top-1/2 left-full h-[15px] w-[9px] -translate-y-1/2 rounded-r-full border-[3px] border-l-0 border-black bg-white'
    }
  />
);

function Component({ title, inputs, outputs, place, tone = 'grey', widths = ['w-[28px]', 'w-[32px]'] }) {
  const tones = {
    grey: 'from-[#f6f6f6] from-10% via-[#d8d8d8] via-15% to-[#bcbcbc]',
    mauve: 'from-[#e0e0e6] from-8% via-[#a5a2b6] via-15% to-[#8c8aa0]',
    lime: 'from-[#e4f05a] from-10% via-[#d3e418] via-15% to-[#b4c806]',
  };
  const lime = tone === 'lime';
  return (
    <div className={`absolute flex rounded-[5px] border-2 bg-linear-to-b ${lime ? 'border-[#123312]' : 'border-[#1a1a1a]'} ${tones[tone]} ${place}`}>
      <ul className={`flex flex-col pb-[3px] ${widths[0]}`}>
        {inputs.map((name) => (
          <li key={name} className="relative flex flex-1 items-center justify-end pr-2">
            <Port side="left" />
            {name}
          </li>
        ))}
      </ul>
      <div
        className={`my-px flex w-[39px] items-center justify-center rounded-[5px] border-2 bg-linear-to-b from-[#8c8c8c] from-5% via-15% pr-[3px] ${
          lime ? 'border-[#0e260e] via-[#2c5030] to-[#1b3d1c]' : 'border-[#0d0d0d] via-[#4a4a4a] to-[#2e2e2e]'
        }`}
      >
        <span className={`rotate-180 font-bold text-[21px] leading-6 [writing-mode:vertical-rl] ${lime ? 'text-[#8ee88c]' : 'text-white'}`}>{title}</span>
      </div>
      <ul className={`flex flex-1 flex-col pb-[3px] ${widths[1]}`}>
        {outputs.map((name) => (
          <li key={name} className="relative flex flex-1 items-center pl-[7px]">
            <Port side="right" />
            {name}
          </li>
        ))}
      </ul>
    </div>
  );
}

const Wire = ({ d }) => (
  <g fill="none">
    <path d={d} stroke="#55534e" strokeWidth="8" />
    <path d={d} stroke="#bfbbb2" strokeWidth="2" />
  </g>
);

function Canvas() {
  return (
    <main className="relative flex-1 overflow-hidden bg-[#d4cfc7] font-['Open_Sans'] text-[17px] leading-6 text-[#1d1d1d]">
      <svg className="absolute inset-0 h-full w-full">
        {[149, 383, 618, 852, 1086].map((x) => (
          <path key={x} d={`M${x} 0V500`} stroke="#b0aba3" strokeWidth="1.300" />
        ))}
        {[66, 144, 222, 300, 378].map((y) => (
          <path key={y} d={`M0 ${y}H1262`} stroke="#b0aba3" strokeWidth="1.300" />
        ))}
        <path d="M8 181.500H60" stroke="#55534e" strokeWidth="5" />
        <Wire d="M170 181.500H613" />
        <Wire d="M170 181.500C230 181 186 92 242 89" />
        <Wire d="M440 89.500H466" />
        <Wire d="M576 89.500C608 92 584 147 613 150" />
      </svg>

      <div className="absolute top-[147px] -left-5 flex h-[132px] w-[22px] flex-col rounded-[5px] border-2 border-[#1a1a1a] bg-[#9a98aa] pt-px">
        <span className="relative h-[62px]"><Port side="right" /></span>
        <span className="relative h-[62px]"><Port side="right" /></span>
      </div>

      <Component title="Explode" inputs={['C', 'R']} outputs={['S', 'V']} tone="mauve" place="left-[64px] top-[154px] h-[105px] w-[103px]" />
      <Component title="pDecon" inputs={['P']} outputs={['X', 'Y', 'Z']} place="left-[470px] top-[39px] h-[101px] w-[102px]" widths={['w-[26px]', 'w-[33px]']} />
      <Component title="Sort" inputs={['K', 'A']} outputs={['K', 'A']} place="left-[617px] top-[131px] h-[70px] w-[103px]" />
      <Component title="Item" inputs={['L', 'i', 'W']} outputs={['i']} tone="lime" place="left-[776px] top-[190px] h-[102px] w-[102px]" widths={['w-[33px]', 'w-[26px]']} />

      {/* number slider */}
      <div className="absolute top-[73px] left-[246px] flex h-[33px] w-[190px] rounded-[6px] border-2 border-[#2a2a2a] bg-linear-to-b from-[#f5f5f5] from-50% to-[#cfcfcf] to-50% px-[14px] pt-px pb-[2px]">
        <Port side="left" />
        <div className="flex flex-1 border-2 border-[#1a1a1a] text-center">
          <div className="flex-1 bg-radial from-[#f2f2f2] to-[#b4b4b4]" />
          <span className="w-12 border-x-2 border-[#1a1a1a] bg-white text-[16px] leading-[21px]">0.50</span>
          <div className="flex-1 bg-radial from-[#f2f2f2] to-[#b4b4b4]" />
        </div>
        <Port side="right" />
      </div>

      {/* warning balloon */}
      <svg className="absolute top-[174px] left-[857px] h-5 w-5" viewBox="0 0 20 20">
        <path d="M3 1.500h14q1.500 0 1.500 1.500v11q0 1.500-1.500 1.500h-5l-2 3-2-3H3q-1.500 0-1.500-1.500V3q0-1.500 1.500-1.500" fill="#f5a623" stroke="#b06a08" />
        <path d="M3 3h14v4q-7 2-14 1z" fill="#fbd283" />
      </svg>

      {/* second grab of the grid with the hand-drawn arrow */}
      <svg className="absolute top-[285px] left-[735px] h-[96px] w-[98px]" viewBox="0 0 98 96">
        <defs>
          <linearGradient id="ink" x1="0" y1="1" x2="1" y2="0">
            <stop offset="0" stopColor="#800408" />
            <stop offset=".5" stopColor="#cc0404" />
            <stop offset="1" stopColor="#e00404" />
          </linearGradient>
        </defs>
        <path d="M40 0h56v95H0V10h40z" fill="#d4cfc7" />
        <path d="M39 0v95" stroke="#b0aba3" strokeWidth="1.500" />
        <path d="M0 89h96" stroke="#b5b0a8" strokeWidth="3" />
        <path d="M7 89Q42 73 68 38" fill="none" stroke="url(#ink)" strokeWidth="8" strokeLinecap="round" />
        <path d="M89 8L79 53L68 36L53 26Z" fill="none" stroke="#d40404" strokeWidth="7" strokeLinejoin="round" />
        <path d="M66 40L84 14" stroke="#d40404" strokeWidth="8" />
      </svg>

      {/* cursor */}
      <svg className="absolute top-[239px] left-[827px] h-6 w-6" viewBox="0 0 24 24">
        <circle cx="14" cy="9.500" r="6.500" fill="#4a5cc8" stroke="#27348a" />
        <T x={13} y={13} s={11} fill="#cfd6ff">i</T>
        <path d="M1 3v14l4-3 3 6 3-1-3-6h5z" fill="#fff" stroke="#444" strokeWidth=".8" />
      </svg>

      {/* markov panel */}
      <div className="absolute bottom-0 left-0 h-[43px] w-[147px] border-t-2 border-r border-black bg-[#eee]">
        <div className="flex h-6 gap-2 border-b border-[#555] pl-1">
          <span className="h-6 w-5 border border-black bg-[#e0a030]" />
          <span className="text-[12px] leading-5">N</span>
        </div>
        <span className="pl-5 text-[12px] leading-4">Auto</span>
      </div>

      {/* compass */}
      <svg className="absolute right-[7px] bottom-[20px] h-[50px] w-[50px]" viewBox="0 0 50 50">
        <path d="M2 3l8 1 3 3q5-3 9-1l-12 13-1 12q-6-8-2-19z" fill="#111" />
        <path d="M46 20l4 5-4 4z" fill="#111" />
        <circle cx="27" cy="26" r="20" fill="#c9c9c9" stroke="#111" />
        <circle cx="27" cy="26" r="18.500" fill="none" stroke="#fff" strokeWidth="2" />
        <circle cx="27" cy="25" r="12" fill="#e4e4e4" />
        <path d="M12 17l6-4-1 7zM36 11l6 6-7-1z" fill="#fff" />
      </svg>
    </main>
  );
}

/* ---------- remote desktop bar, taskbar, side strip ---------- */

function RemoteBar() {
  return (
    <header className="absolute top-0 left-1/2 z-30 flex h-[23px] w-[578px] -translate-x-1/2 items-center justify-between border-b border-[#9bb6da] bg-linear-to-b from-[#6f97ca] via-[#3b6cb0] via-50% to-[#1e4f94] pr-8 pl-8 text-white [clip-path:polygon(0_0,100%_0,96%_100%,4.500%_100%)]">
      <div className="flex w-16 items-center gap-[5px]">
        <button type="button" aria-label="Pin" className="grid h-5 w-4 place-items-center"><Pin className="h-[14px] w-[14px] rotate-90 fill-white" /></button>
        <button type="button" aria-label="Security" className="grid h-5 w-4 place-items-center">
          <Lock className="h-[14px] w-[14px] fill-[#2f5fa4]" strokeWidth={3} />
        </button>
        <svg className="h-3 w-3" viewBox="0 0 12 12"><path d="M1 9v3M4 7v5M7 4v8M10 1v11" stroke="#fff" strokeWidth="2" /></svg>
      </div>
      <span className="text-[12px]">kpfny-1041</span>
      <div className="flex w-16 items-center justify-end gap-[5px]">
        <button type="button" aria-label="Minimize session" className="flex h-5 w-4 items-center justify-center"><svg className="h-3 w-3" viewBox="0 0 12 12"><path d="M1 10h10" stroke="#fff" strokeWidth="2" /></svg></button>
        <button type="button" aria-label="Restore session" className="flex h-5 w-4 items-center justify-center"><svg className="h-3 w-3" viewBox="0 0 12 12"><path d="M1 5h7v6H1zM4 4V1h7v6H9M1 6h7" fill="none" stroke="#fff" /></svg></button>
        <button type="button" aria-label="Close session" className="flex h-5 w-4 items-center justify-center"><svg className="h-3 w-3" viewBox="0 0 12 12"><path d="M2 2l8 8M10 2l-8 8" stroke="#fff" strokeWidth="2" /></svg></button>
      </div>
    </header>
  );
}

const APPS = [
  {
    name: 'File Explorer',
    art: (
      <g>
        <path d="M1 4h8l2 2h12v16H1z" fill="#f0bf4c" /><path d="M1 8h22v14H1z" fill="#fde08a" /><path d="M5 13h14v9h-4v-4H9v4H5z" fill="#2fb0e6" />
      </g>
    ),
  },
  {
    name: 'Outlook',
    art: (
      <g>
        <path d="M12 6h10v10H12z" fill="#fff" stroke="#0f6cc0" /><path d="M15 10l2 3 5-6" stroke="#0f6cc0" fill="none" strokeWidth="1.500" />
        <path d="M1 4l12-2v20L1 20z" fill="#0f6cc0" /><T x={3} y={16} s={11} fill="#fff" fontWeight="bold">O</T>
        <path d="M11 15h14v10H11z" fill="#eeb776" /><path d="M11 15l7 6 7-6" fill="none" stroke="#fff3df" />
      </g>
    ),
  },
  {
    name: 'Chrome',
    art: (
      <g>
        <circle cx="12" cy="12" r="11" fill="#fbc116" />
        <path d="M12 12L2.500 6.500A11 11 0 0 1 22 7H12z" fill="#dd4b3c" /><path d="M2.500 6.500A11 11 0 0 0 11 23l5-9-4-2z" fill="#1da260" />
        <path d="M22 7H12v5l4 2-5 9A11 11 0 0 0 22 7" fill="#fbc116" />
        <circle cx="12" cy="12" r="5.200" fill="#fff" /><circle cx="12" cy="12" r="4.200" fill="#4587f3" />
      </g>
    ),
  },
  {
    name: 'Skype',
    art: (
      <g>
        <circle cx="8" cy="8" r="7" fill="#e8f7fd" /><circle cx="16" cy="16" r="7" fill="#e8f7fd" /><circle cx="12" cy="12" r="10" fill="#1ba8e0" stroke="#e8f7fd" />
        <path d="M16 8q-4-4-7-1q-2 4 3 5t3 4q-3 4-7 0" fill="none" stroke="#fff" strokeWidth="2.500" />
        <circle cx="20" cy="20" r="5.500" fill="#6aab12" stroke="#fff" /><path d="M18 20l2 2 3-4" stroke="#fff" fill="none" strokeWidth="1.500" />
      </g>
    ),
  },
  {
    name: 'Word',
    art: (
      <g>
        <path d="M12 4h10v16H12z" fill="#dce8f8" stroke="#fff" /><path d="M15 7h5v10h-5z" fill="#8fb0de" /><path d="M1 4l13-2v20L1 20z" fill="#2a5699" />
        <T x={3} y={16} s={10} fill="#fff" fontWeight="bold">W</T>
      </g>
    ),
  },
  {
    name: 'Acrobat',
    art: (
      <g>
        <rect x="1.500" y="1.500" width="21" height="21" fill="#2c0a0a" stroke="#d8221c" strokeWidth="1.500" />
        <path d="M5 18q-2-2 7-4q7-1 7 1q-2 2-6-3q-3-5-1-7q2 2-2 8q-3 5-5 5" fill="none" stroke="#fff" strokeWidth="1.300" />
      </g>
    ),
  },
  {
    name: 'Excel',
    art: (
      <g>
        <path d="M12 4h10v16H12z" fill="#fff" /><path d="M12 7h10M12 10h10M12 13h10M12 16h10M18 4v16" stroke="#1e7145" strokeWidth="1.500" />
        <path d="M1 4l13-2v20L1 20z" fill="#1e7145" /><T x={4} y={16} s={11} fill="#fff" fontWeight="bold">X</T>
      </g>
    ),
  },
  {
    name: 'Rhinoceros',
    active: true,
    art: (
      <g>
        <rect width="24" height="24" fill="#161616" />
        <path d="M4 2l8-1-2 5 4 4 3-1 4 3 3 2v9h-9l-5-4-6-2-2-4 2-4-3-5z" fill="#e8e8e8" />
        <path d="M13 2l5 3 1 4-4-2z" fill="#ccc" /><path d="M7 9l3 3M9 6l2 6 4 2" stroke="#555" fill="none" /><path d="M8 12h3v2H8z" fill="#7a3a44" />
      </g>
    ),
  },
];

function Taskbar() {
  return (
    <footer className="absolute inset-x-0 bottom-0 z-40 flex h-10 bg-[#232221]/92 text-white">
      <button type="button" aria-label="Start" className="grid w-12 place-items-center">
        <svg className="h-4 w-4" viewBox="0 0 16 16"><path d="M0 2l7-1v6.500H0zM8 1l8-1v7.500H8zM0 8.500h7V15l-7-1zM8 8.500h8V16l-8-1z" fill="#fff" /></svg>
      </button>
      <label className="flex w-[344px] items-center gap-[10px] bg-[#464646] pl-[9px]">
        <svg className="h-[22px] w-[22px] shrink-0" viewBox="0 0 22 22"><circle cx="11" cy="11" r="9" fill="none" stroke="#f2f2f2" strokeWidth="3" /></svg>
        <input type="search" aria-label="Search" placeholder="Type here to search" className="w-full bg-transparent font-['Open_Sans'] text-[14px] placeholder:text-[#b5b5b5] focus:outline-none" />
      </label>
      <button type="button" aria-label="Task view" className="grid w-[49px] place-items-center">
        <svg className="h-5 w-5" viewBox="0 0 20 20" fill="none" stroke="#f2f2f2"><path d="M4.500 3.500h11v13h-11zM2.500 5.500h-2v9h2M17.500 5.500h2v9h-2" /></svg>
      </button>
      {APPS.map((app) => (
        <button
          key={app.name}
          type="button"
          aria-label={app.name}
          className={`flex w-[49px] flex-col items-center ${app.active ? 'bg-white/10' : ''}`}
        >
          <svg className="mt-2 mb-auto h-6 w-6 overflow-visible" viewBox="0 0 24 24">{app.art}</svg>
          <span className="h-[2px] w-10 bg-[#b9b9b9]" />
        </button>
      ))}
      <div className="ml-auto flex items-center pr-[14px]">
        <svg className="mr-[22px] h-4 w-4" viewBox="0 0 16 16" fill="none" stroke="#eee" strokeWidth="1.200"><circle cx="11" cy="4" r="3" /><circle cx="5" cy="8" r="2.500" /><path d="M1 15q0-4 4-4t4 4M8 8q6-2 7 3" /></svg>
        <svg className="mr-[10px] h-3 w-3" viewBox="0 0 12 12"><path d="M0 9l6-6 6 6" fill="none" stroke="#eee" strokeWidth="1.200" /></svg>
        <svg className="mr-[7px] h-4 w-4" viewBox="0 0 16 16" fill="none" stroke="#eee"><path d="M3.500 3.500h12v8h-12zM7 14.500h6M10 12v2M.5 1.500h4v4h-4zM2.500 6v8h3" /></svg>
        <svg className="mr-[13px] h-4 w-4" viewBox="0 0 16 16" fill="none" stroke="#eee"><path d="M1.500 6v4h2l4 4V2l-4 4zM10.500 6l4 4M14.500 6l-4 4" /></svg>
        <svg className="mr-[9px] h-[18px] w-[18px]" viewBox="0 0 18 18" fill="none" stroke="#eee" strokeWidth="1.200"><path d="M8 13l-3 1 1-3 6-9 2 2zM4 9q-5 3-2 6q4 3 9-2t6-5q1 4-3 4" /></svg>
        <div className="w-[62px] text-center font-['Open_Sans'] text-[11px] leading-[18px] whitespace-nowrap">
          <div>7:49 AM</div>
          <div>8/30/2018</div>
        </div>
        <button type="button" aria-label="Notifications" className="ml-[13px] grid h-7 w-7 place-items-center">
          <svg className="h-7 w-7" viewBox="0 0 28 28">
            <path d="M1 4h17v12H9v4l-4-4H1z" fill="#fff" /><path d="M4 7h11M4 10h11M4 13h8" stroke="#333" />
            <circle cx="17" cy="19" r="8" fill="#3a3a3a" stroke="#aaa" /><T x={14} y={23} s={11} fill="#fff">2</T>
          </svg>
        </button>
      </div>
    </footer>
  );
}

function SidePanel() {
  return (
    <aside className="absolute inset-y-0 right-0 flex w-[11px] flex-col overflow-hidden bg-[#e6e9f2] text-[#777]">
      <div className="h-[42px] bg-white" />
      <div className="flex h-[52px] flex-col items-center justify-around bg-[#f0f0f2] text-[#333]">
        <svg className="h-1 w-2" viewBox="0 0 8 4"><path d="M0 4l4-3 4 3" fill="none" stroke="currentColor" strokeWidth="1.500" /></svg>
        <svg className="h-1 w-2" viewBox="0 0 8 4"><path d="M0 0l4 3 4-3" fill="none" stroke="currentColor" strokeWidth="1.500" /></svg>
        <Caret />
      </div>
      <div className="h-[22px] border-t border-dashed border-[#888] pt-1"><Settings className="h-4 w-4" strokeWidth={1} /></div>
      <div className="h-[34px] border-t border-[#888] bg-white" />
      <div className="h-[54px] border-t border-dashed border-[#888] bg-linear-to-b from-white to-[#dfe3f2]" />
      <div className="h-[24px] border-t border-dashed border-[#888] pt-1"><Settings className="h-4 w-4" strokeWidth={1} /></div>
      <div className="h-[24px] border border-[#888] bg-white" />
      <div className="h-[73px] bg-white" />
      <div className="flex h-[17px] justify-end overflow-hidden bg-[#0f6ed8]"><span className="h-4 w-2 rounded-l-full border border-dotted border-[#111] bg-white" /></div>
      <div className="h-[137px] bg-white" />
      <div className="h-[18px] border-b border-[#888] bg-[#ececec]">
        <svg className="mt-1 ml-px h-2 w-2" viewBox="0 0 8 8"><path d="M1 0l5 4-5 4" fill="none" stroke="#111" /></svg>
      </div>
      <div className="mt-2 h-[28px] border-y border-dashed border-[#888] pt-2"><Settings className="h-4 w-4" strokeWidth={1} /></div>
      <div className="flex h-[86px] flex-col justify-center border-y border-[#888] bg-white"><span className="h-4 w-[7px] bg-[#c4c4c4]" /></div>
      <div className="mt-11 flex-1 border-t border-l border-[#888]" />
    </aside>
  );
}

/* blown-up grabs of the window corner, with the marker drawings on them */
function CornerMarkup() {
  return (
    <div className="pointer-events-none absolute top-0 left-0 z-20 h-[150px] w-[120px] text-[#8b8b8b]">
      <div className="absolute top-0 left-[8px] h-[77px] w-[96px] overflow-hidden bg-white font-['Open_Sans'] text-[22px] leading-7">
        <div className="flex h-[35px] items-end gap-[6px] border-b border-[#999] bg-linear-to-b from-white from-50% to-[#f1f1f1]">
          <svg className="h-[30px] w-[26px] shrink-0" viewBox="0 0 26 30">
            <rect width="26" height="30" fill="#1b1b1b" />
            <path d="M1 9l4 6 6-2 4 3 9-4-3 6-5 2v5l4 4H10l-2-5-6-4z" fill="#b4b4b4" /><path d="M3 12l4 5 7 1" stroke="#6e4a50" fill="none" strokeWidth="2" />
          </svg>
          <span className="mb-[-3px]">Blocks</span>
        </div>
        <p className="pt-[17px] pl-[18px]">Grassh</p>
      </div>
      <div className="absolute top-[77px] left-[10px] h-[72px] w-[50px] bg-[#f2f2f4]">
        <div className="h-[18px] bg-[#454545]" />
      </div>
      <svg className="absolute inset-0 h-full w-full overflow-visible" viewBox="0 0 120 150">
        <defs>
          <linearGradient id="ink-down" x1="0" y1="0" x2="0" y2="1">
            <stop offset="0" stopColor="#a80408" />
            <stop offset="1" stopColor="#d40404" />
          </linearGradient>
          <linearGradient id="ink-ring" x1="0" y1="0" x2="0" y2="1">
            <stop offset="0" stopColor="#dc0606" />
            <stop offset="1" stopColor="#8e0408" />
          </linearGradient>
        </defs>
        <path d="M42 127v-16h5" fill="none" stroke="#c8882c" strokeWidth="2" />
        <path d="M45 112v14M57 113v15" stroke="#1b2a78" strokeWidth="3" /><path d="M51 113v14M61 113v12" stroke="#111" strokeWidth="2" />
        <path d="M28-6Q58 14 84 52" fill="none" stroke="url(#ink-down)" strokeWidth="9" />
        <path d="M86 22L96 68L62 52L75 42Z" fill="none" stroke="#b80808" strokeWidth="7" strokeLinejoin="round" />
        <path d="M84 48l12 22-22-15z" fill="#b80808" />
        <path d="M41 88Q14 82 4 98Q-5 115 6 128Q20 141 40 132Q56 122 50 106Q42 90 15 94" fill="none" stroke="url(#ink-ring)" strokeWidth="6" strokeLinecap="round" />
      </svg>
    </div>
  );
}

export default function App() {
  return (
    <div className="relative h-screen overflow-hidden bg-white font-['Roboto',sans-serif] text-black">
      {/* Rhino window behind */}
      <div className="flex h-[42px] items-start justify-between pt-[4px] pr-[5px] pl-[104px] text-[#929292]">
        <span className="font-['Open_Sans'] text-[12px] leading-4 whitespace-nowrap">s.3dm (52 KB) - Rhinoceros 5.0 Commercial - [Top</span>
        <TitleButtons maximized />
      </div>
      <SidePanel />

      {/* Grasshopper window */}
      <div className="absolute top-[17px] right-[11px] bottom-0 left-[5px] flex flex-col border-t border-r border-l-2 border-t-[#bbb] border-r-[#999] border-l-[#8a8f98] bg-white shadow-[0_0_6px_rgba(0,0,0,0.3)]">
        <div className="flex h-[30px] shrink-0 items-center justify-between pr-[3px] pl-[97px] text-[#929292]">
          <span className="font-['Open_Sans'] text-[12px]">ocks_&amp;_Parcels_tutorial*</span>
          <TitleButtons />
        </div>
        <div className="flex h-[24px] shrink-0 items-center justify-between bg-[#f4f4f4] pr-[9px] pl-[95px] text-[11px]">
          <div className="flex gap-[19px]">
            <button type="button" aria-label="View">ew</button>
            <button type="button">Display</button>
            <button type="button">Solution</button>
            <button type="button">Help</button>
            <button type="button">MetaHopper</button>
          </div>
          <span>Blocks__Parcels_tutorial</span>
        </div>
        <Ribbon />
        <Toolbar />
        <Canvas />
      </div>

      <RemoteBar />
      <CornerMarkup />
      <Taskbar />
    </div>
  );
}
